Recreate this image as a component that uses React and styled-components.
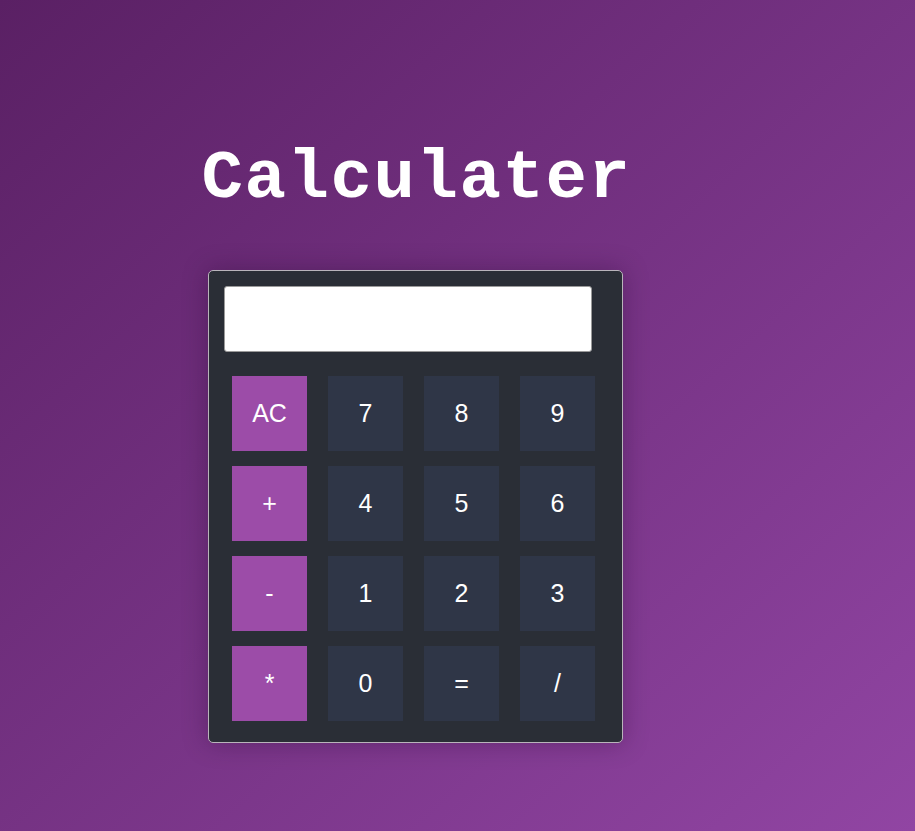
import React from 'react'
import styled, { createGlobalStyle } from 'styled-components'

const GlobalStyle = createGlobalStyle`
  html, body {
    margin: 0;
    padding: 0;
  }
  body {
    min-height: 100vh;
    background: linear-gradient(to bottom right, #5a2064, #9145a3);
    font-family: "Liberation Sans", Arial, sans-serif;
  }
`

const KEYS = [
  ['AC', '7', '8', '9'],
  ['+', '4', '5', '6'],
  ['-', '1', '2', '3'],
  ['*', '0', '=', '/'],
]

const OPERATORS = ['AC', '+', '-', '*']

export default function App() {
  return (
    <>
      <GlobalStyle />
      <Page>
        <Column>
          <Title>Calculater</Title>
          <Calculator>
            <Display type="text" readOnly value="" />
            <Keypad>
              {KEYS.flat().map(key => (
                <Key key={key} operator={OPERATORS.includes(key)}>
                  {key}
                </Key>
              ))}
            </Keypad>
          </Calculator>
        </Column>
      </Page>
    </>
  )
}

const Page = styled.main`
  min-height: 100vh;
  padding: 152px 0 0 208px;
  box-sizing: border-box;
`

const Column = styled.div`
  width: 415px;
  display: flex;
  flex-direction: column;
  align-items: center;
`

const Title = styled.h1`
  margin: 0 0 63px;
  padding-left: 2px;
  font-family: "Courier New", "Liberation Mono", monospace;
  font-size: 69px;
  font-weight: bold;
  letter-spacing: 1.6px;
  line-height: 55px;
  height: 55px;
  color: #ffffff;
  white-space: nowrap;
`

const Calculator = styled.div`
  width: 100%;
  box-sizing: border-box;
  padding: 15px 29px 21px 15px;
  background: #2a2e36;
  border: 1px solid #b9b4bb;
  border-radius: 5px;
  box-shadow: 0 0 24px rgba(40, 10, 50, 0.35);
`

const Display = styled.input`
  display: block;
  width: 368px;
  height: 66px;
  box-sizing: border-box;
  margin: 0 0 24px;
  background: #ffffff;
  border: 1px solid #9a9a9a;
  border-radius: 3px;
  outline: none;
`

const Keypad = styled.div`
  display: grid;
  grid-template-columns: repeat(4, 75px);
  grid-auto-rows: 75px;
  column-gap: 21px;
  row-gap: 15px;
  padding-left: 8px;
`

const Key = styled.button.withConfig({
  shouldForwardProp: prop => prop !== 'operator',
})`
  display: flex;
  align-items: center;
  justify-content: center;
  padding: 0;
  border: none;
  background: ${props => (props.operator ? '#9c4ca8' : '#2f3647')};
  color: #ffffff;
  font-family: "Liberation Sans", Arial, sans-serif;
  font-size: 25px;
  cursor: pointer;
`
